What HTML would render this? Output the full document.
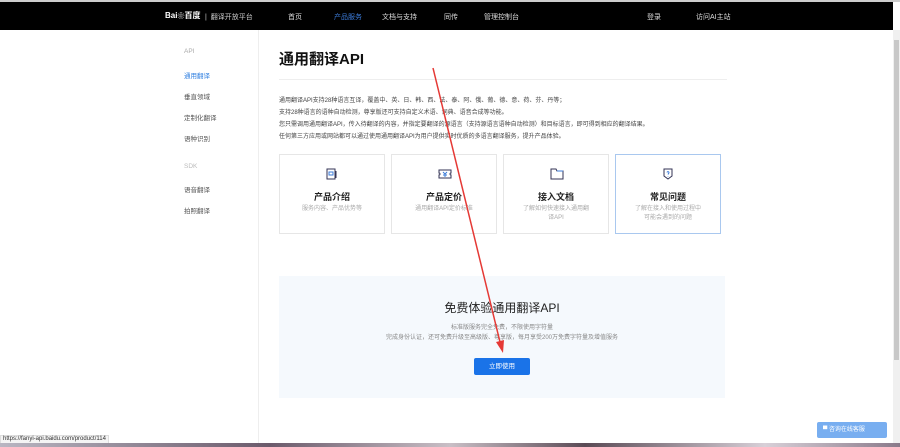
<!DOCTYPE html><html><head><meta charset="utf-8"><style>
*{margin:0;padding:0;box-sizing:border-box}
body{width:900px;height:447px;overflow:hidden;background:#fff;font-family:"Liberation Sans","Noto Sans CJK SC",sans-serif;position:relative;color:#333}
.a{position:absolute;white-space:nowrap}
.nav{position:absolute;left:0;top:2px;width:893px;height:28px;background:#000;color:#ddd;font-size:7px}
.nav .a{top:10px}
.card{position:absolute;top:154px;width:106px;height:80px;border:1px solid #e6e6e6;text-align:center}
.card .t{position:absolute;top:35px;width:100%;font-size:9px;font-weight:bold;color:#222}
.card .d{position:absolute;top:50px;width:100%;font-size:6px;color:#aaa;line-height:9px;padding:0 19px;white-space:normal}
.card svg{position:absolute;left:46px;top:13px}
.side{font-size:6.5px;color:#555}
</style></head><body>
<div class="a" style="left:0;top:0;width:900px;height:2px;background:#ccc"></div>
<div class="nav">
<span class="a" style="left:165px;top:8px!important;font-size:8px;font-weight:bold;color:#fff">Bai<span style="font-size:7px">❀</span>百度</span>
<span class="a" style="left:205px;color:#ccc">|&nbsp; 翻译开放平台</span>
<span class="a" style="left:288px">首页</span>
<span class="a" style="left:334px;color:#3b7bd9">产品服务</span>
<span class="a" style="left:382px">文档与支持</span>
<span class="a" style="left:444px">同传</span>
<span class="a" style="left:484px">管理控制台</span>
<span class="a" style="left:647px">登录</span>
<span class="a" style="left:696px">访问AI主站</span>
</div>
<div class="a" style="left:258px;top:30px;width:1px;height:413px;background:#eee"></div>
<div class="a side" style="left:184px;top:48px;color:#aaa">API</div>
<div class="a side" style="left:184px;top:70px;color:#2f7fe0">通用翻译</div>
<div class="a side" style="left:184px;top:91px">垂直领域</div>
<div class="a side" style="left:184px;top:112px">定制化翻译</div>
<div class="a side" style="left:184px;top:133px">语种识别</div>
<div class="a side" style="left:184px;top:163px;color:#bbb">SDK</div>
<div class="a side" style="left:184px;top:184px">语音翻译</div>
<div class="a side" style="left:184px;top:205px">拍照翻译</div>
<div class="a" style="left:279px;top:48px;font-size:15px;font-weight:bold;color:#111">通用翻译API</div>
<div class="a" style="left:279px;top:79px;width:448px;height:1px;background:#eee"></div>
<div class="a" style="left:279px;top:95px;font-size:6px;line-height:12px;color:#444">通用翻译API支持28种语言互译，覆盖中、英、日、韩、西、法、泰、阿、俄、葡、德、意、荷、芬、丹等；<br>支持28种语言的语种自动检测，尊享版还可支持自定义术语、词典、语音合成等功能。<br>您只需调用通用翻译API，传入待翻译的内容，并指定要翻译的源语言（支持源语言语种自动检测）和目标语言，即可得到相应的翻译结果。<br>任何第三方应用或网站都可以通过使用通用翻译API为用户提供实时优质的多语言翻译服务，提升产品体验。</div>
<div class="card" style="left:279px"><svg width="12" height="12" viewBox="0 0 12 12" fill="none" stroke="#335" stroke-width="1"><rect x="1" y="1" width="8" height="10"/><rect x="3" y="4" width="4" height="3" stroke="#3b7bd9"/><path d="M10 3v7"/></svg><div class="t">产品介绍</div><div class="d">服务内容、产品优势等</div></div>
<div class="card" style="left:391px"><svg width="14" height="12" viewBox="0 0 14 12" fill="none" stroke="#335" stroke-width="1"><path d="M1 2h12v3a1 1 0 0 0 0 2v3H1V7a1 1 0 0 0 0-2z"/><path d="M5 4l2 2 2-2M5 7h4M7 6v3" stroke="#3b7bd9"/></svg><div class="t">产品定价</div><div class="d" style="padding:0 8px">通用翻译API定价标准</div></div>
<div class="card" style="left:503px"><svg width="14" height="12" viewBox="0 0 14 12" fill="none" stroke="#335" stroke-width="1"><path d="M1 1h5l1 2h6v8H1z"/><path d="M7 3h6" stroke="#3b7bd9"/></svg><div class="t">接入文档</div><div class="d">了解如何快速接入通用翻译API</div></div>
<div class="card" style="left:615px;border-color:#a9c8ef"><svg width="12" height="12" viewBox="0 0 12 12" fill="none" stroke="#335" stroke-width="1"><path d="M2 1h8v7l-4 3-4-3z"/><path d="M5 4.5a1 1 0 1 1 1.5 1L6 6.5M6 8v.5" stroke="#3b7bd9"/></svg><div class="t">常见问题</div><div class="d">了解在接入和使用过程中可能会遇到的问题</div></div>
<div class="a" style="left:279px;top:276px;width:446px;height:122px;background:#f5f9fd"></div>
<div class="a" style="left:279px;top:299px;width:446px;text-align:center;font-size:12px;color:#222">免费体验通用翻译API</div>
<div class="a" style="left:279px;top:323px;width:446px;text-align:center;font-size:6px;line-height:10px;color:#888">标准版服务完全免费，不限使用字符量<br>完成身份认证，还可免费升级至高级版、尊享版，每月享受200万免费字符量及增值服务</div>
<div class="a" style="left:474px;top:358px;width:56px;height:17px;background:#1a73e8;border-radius:2px;color:#fff;font-size:6.5px;text-align:center;line-height:17px">立即使用</div>
<svg class="a" style="left:0;top:0" width="900" height="447"><line x1="433" y1="68" x2="500" y2="342" stroke="#e53935" stroke-width="1.5"/><path d="M496 342l7 11 1-13z" fill="#e53935"/></svg>
<div class="a" style="left:817px;top:422px;width:70px;height:16px;background:#78aef0;border-radius:2px;color:#fff;font-size:6px;line-height:16px;padding-left:6px">▀ 咨询在线客服</div>
<div class="a" style="left:893px;top:30px;width:7px;height:413px;background:#f0f0f0"></div>
<div class="a" style="left:894px;top:40px;width:5px;height:320px;background:#c8c8c8"></div>
<div class="a" style="left:0;top:435px;height:9px;background:#f4f4f4;border:1px solid #ddd;font-size:6px;line-height:7px;padding:0 2px;color:#333">https://fanyi-api.baidu.com/product/114</div>
<div class="a" style="left:0;top:443px;width:900px;height:4px;background:linear-gradient(90deg,#b9b6c2,#6b5a6b 30%,#c9bfc6 50%,#5a4a55 65%,#d8d0d8 85%,#8a7a8a)"></div>
</body></html>
